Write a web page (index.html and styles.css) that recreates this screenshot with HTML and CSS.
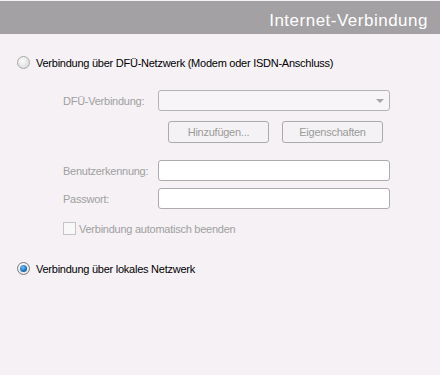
FILE: index.html
```html
<!DOCTYPE html>
<html lang="de">
<head>
  <meta charset="UTF-8" />
  <title>Internet-Verbindung</title>
  <link rel="stylesheet" href="styles.css">
</head>
<body>

  <div class="title">Internet-Verbindung</div>

  <form class="panel">
    <label class="option">
      <span class="radio"></span>
      Verbindung über DFÜ-Netzwerk (Modem oder ISDN-Anschluss)
    </label>

    <div class="dialup">
      <div class="field">
        <span class="label">DFÜ-Verbindung:</span>
        <span class="control select"><span class="arrow"></span></span>
      </div>

      <div class="buttons">
        <span class="btn">Hinzufügen...</span>
        <span class="btn">Eigenschaften</span>
      </div>

      <div class="field user">
        <span class="label">Benutzerkennung:</span>
        <span class="control"></span>
      </div>
      <div class="field pass">
        <span class="label">Passwort:</span>
        <span class="control"></span>
      </div>

      <label class="check">
        <span class="box"></span>
        Verbindung automatisch beenden
      </label>
    </div>

    <label class="option lan">
      <span class="radio checked"></span>
      Verbindung über lokales Netzwerk
    </label>
  </form>

</body>
</html>
```

FILE: styles.css
```css
body {
  margin: 0;
  background: #f5f1f5;
  font-family: "Liberation Sans", Arial, sans-serif;
  font-size: 11px;
  letter-spacing: -0.25px;
  color: #000;
}
.title {
  margin-top: 1px;
  height: 23px;
  padding: 10px 12px 0 0;
  line-height: 20px;
  background: #a3a1a3;
  color: #fff;
  font-size: 17px;
  letter-spacing: 0.5px;
  text-align: right;
}
.panel {
  padding-left: 17px;
}
.option {
  display: flex;
  align-items: center;
  gap: 6px;
  height: 13px;
  margin-top: 22px;
}
.option.lan {
  margin-top: 27px;
}
.radio {
  width: 11px;
  height: 11px;
  border-radius: 50%;
  border: 1px solid #a9a9a9;
  background: radial-gradient(circle at 40% 35%, #fdfdfd, #d2d2d2);
  position: relative;
}
.radio.checked {
  border-color: #7a7a7a;
  background: radial-gradient(circle at 40% 35%, #ffffff, #dcdcdc);
}
.radio.checked::after {
  content: "";
  position: absolute;
  left: 2px;
  top: 2px;
  width: 7px;
  height: 7px;
  border-radius: 50%;
  background: radial-gradient(circle at 40% 35%, #6fc0f5, #1b6fc0 60%, #0c3f7a);
}
.dialup {
  padding-left: 46px;
  margin-top: 21px;
  color: #a0a0a0;
}
.field {
  display: flex;
  align-items: center;
  height: 21px;
}
.label {
  width: 95px;
}
.control {
  width: 232px;
  height: 21px;
  box-sizing: border-box;
  border: 1px solid #acacac;
  border-radius: 3px;
  background: #fff;
}
.select {
  background: #f7f5f7;
  border-color: #b4b4b4;
  display: flex;
  align-items: center;
  justify-content: flex-end;
  padding-right: 5px;
}
.arrow {
  width: 0;
  height: 0;
  border-left: 4px solid transparent;
  border-right: 4px solid transparent;
  border-top: 4px solid #a6a6a6;
}
.buttons {
  display: flex;
  gap: 13px;
  margin: 10px 0 0 105px;
}
.btn {
  width: 101px;
  height: 22px;
  box-sizing: border-box;
  border: 1px solid #ababab;
  border-radius: 3px;
  background: #f4f2f4;
  color: #9a9a9a;
  text-align: center;
  line-height: 20px;
}
.user {
  margin-top: 17px;
}
.pass {
  margin-top: 7px;
}
.check {
  display: flex;
  align-items: center;
  gap: 3px;
  margin-top: 13px;
  height: 13px;
}
.box {
  width: 11px;
  height: 11px;
  border: 1px solid #c4c4c4;
  background: #f8f8f8;
}
```
